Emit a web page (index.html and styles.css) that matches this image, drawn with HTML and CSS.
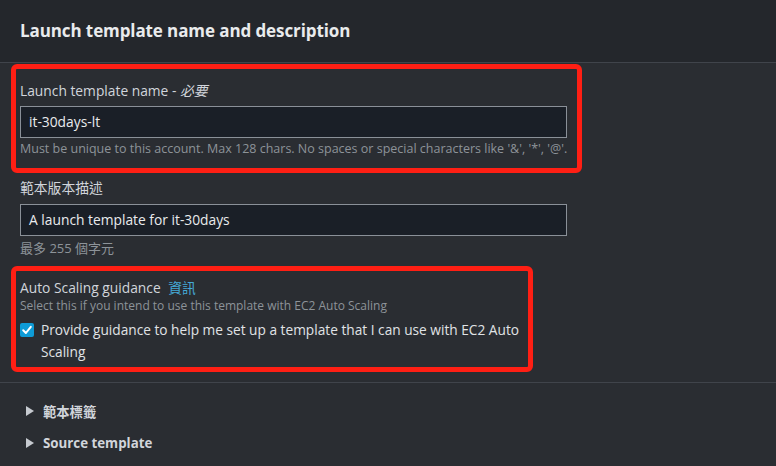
FILE: index.html
```html
<!DOCTYPE html>
<html>
<head>
<meta charset="utf-8">
<link rel="stylesheet" href="styles.css">
</head>
<body>
<div class="header"><h2 class="title">Launch template name and description</h2></div>
<div class="content">
  <div class="callout callout-name">
    <div class="label">Launch template name - <i class="req">必要</i></div>
    <div class="input">it-30days-lt</div>
    <div class="hint">Must be unique to this account. Max 128 chars. No spaces or special characters like '&amp;', '*', '@'.</div>
  </div>
  <div class="label label-desc">範本版本描述</div>
  <div class="input">A launch template for it-30days</div>
  <div class="hint hint-desc">最多 255 個字元</div>
  <div class="callout callout-as">
    <div class="label label-as">Auto Scaling guidance <a class="info">資訊</a></div>
    <div class="desc">Select this if you intend to use this template with EC2 Auto Scaling</div>
    <div class="check-row">
      <span class="checkbox"><svg width="14" height="14" viewBox="0 0 14 14"><path d="M3.2 7.2 L5.9 10 L10.8 3.8" fill="none" stroke="#fff" stroke-width="2" stroke-linecap="round" stroke-linejoin="round"/></svg></span>
      <span class="check-text">Provide guidance to help me set up a template that I can use with EC2 Auto Scaling</span>
    </div>
  </div>
</div>
<div class="divider"></div>
<div class="expanders">
  <div class="expander"><span class="caret"></span><span class="exp-text">範本標籤</span></div>
  <div class="expander"><span class="caret"></span><span class="exp-text">Source template</span></div>
</div>
</body>
</html>
```
FILE: styles.css
```css
html, body {
  margin: 0;
  padding: 0;
  background: #2a2d32;
  font-family: "Open Sans", "Noto Sans CJK TC", sans-serif;
  color: #d1d5db;
  overflow: hidden;
}
.header {
  height: 62px;
  padding: 0 20px;
  display: flex;
  align-items: center;
  background: #24272c;
  border-bottom: 1px solid #40444b;
}
.title {
  margin: 0 0 2px;
  font-size: 17px;
  font-weight: 700;
  color: #e9ebed;
  letter-spacing: -0.1px;
}
.content {
  padding: 0 20px;
  display: flex;
  flex-direction: column;
  align-items: flex-start;
}
.callout {
  border: 5px solid #ff1f14;
  border-radius: 6px;
  margin-left: -9px;
  padding-left: 4px;
  box-sizing: border-box;
}
.callout-name {
  width: 571px;
  margin-top: 1px;
  padding-top: 11px;
  padding-bottom: 9px;
}
.label {
  font-size: 13.8px;
  line-height: 22px;
  color: #d1d5db;
}
.req {
  font-style: italic;
}
.input {
  margin-top: 4px;
  width: 547px;
  height: 32px;
  box-sizing: border-box;
  background: #1a1f27;
  border: 1px solid #8a9098;
  padding: 0 8px;
  font-size: 13.8px;
  line-height: 30px;
  color: #e9ebed;
}
.hint {
  margin-top: 1px;
  font-size: 12.5px;
  line-height: 20px;
  color: #8d9399;
}
.label-desc {
  margin-top: 4px;
}
.label-desc + .input {
  margin-top: 5px;
}
.hint-desc {
  margin-top: 2px;
  font-size: 13px;
}
.callout-as {
  width: 522px;
  margin-top: 8px;
  padding-top: 0px;
  padding-bottom: 4px;
  padding-right: 6px;
}
.label-as {
  line-height: 20px;
  margin-top: 7px;
}
.info {
  color: #45a9d6;
  margin-left: 4px;
}
.desc {
  font-size: 12px;
  line-height: 16px;
  color: #8d9399;
}
.check-row {
  margin-top: 5px;
  display: flex;
  align-items: flex-start;
  gap: 7px;
}
.checkbox {
  flex: none;
  width: 14px;
  height: 14px;
  margin-top: 4px;
  background: #0e9bd6;
  border-radius: 2px;
  display: flex;
}
.check-text {
  font-size: 13.7px;
  line-height: 22px;
  color: #e0e3e6;
}
.divider {
  margin-top: 10px;
  height: 1px;
  background: #40444b;
}
.expanders {
  padding: 17px 26px 0;
  display: flex;
  flex-direction: column;
  gap: 10px;
}
.expander {
  display: flex;
  align-items: center;
  height: 22px;
}
.caret {
  width: 0;
  height: 0;
  border-top: 5px solid transparent;
  border-bottom: 5px solid transparent;
  border-left: 8px solid #c6cad0;
  margin-right: 9px;
}
.exp-text {
  font-size: 13.3px;
  font-weight: 700;
  color: #d1d5db;
}
```
